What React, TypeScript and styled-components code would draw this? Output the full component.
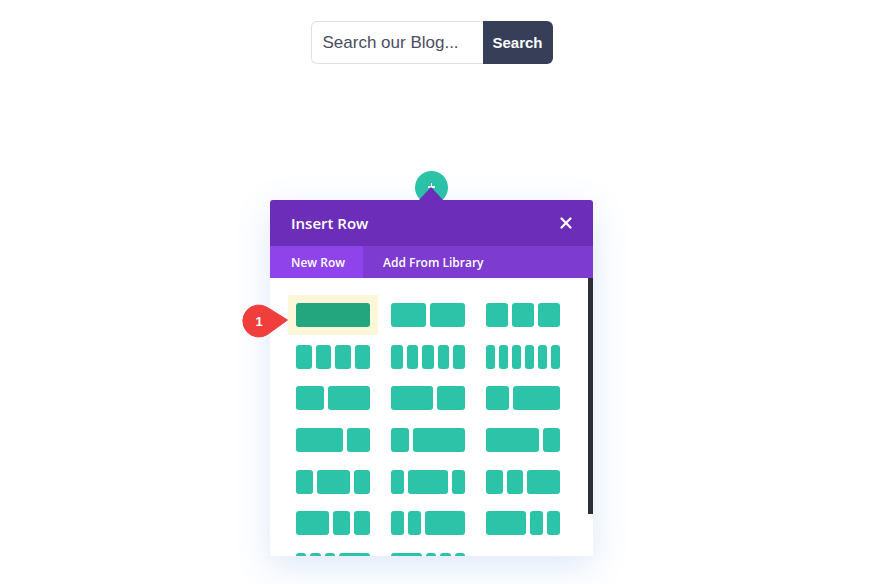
import React from 'react';
import styled, { createGlobalStyle } from 'styled-components';

const GlobalStyle = createGlobalStyle`
  body {
    margin: 0;
    background: #ffffff;
    font-family: "Open Sans", "Liberation Sans", sans-serif;
  }
`;

const layouts: number[][][] = [
  [[1], [1, 1], [1, 1, 1]],
  [[1, 1, 1, 1], [1, 1, 1, 1, 1], [1, 1, 1, 1, 1, 1]],
  [[2, 3], [3, 2], [1, 2]],
  [[2, 1], [1, 3], [3, 1]],
  [[1, 2, 1], [1, 3, 1], [1, 1, 2]],
  [[2, 1, 1], [1, 1, 3], [3, 1, 1]],
  [[1, 1, 1, 3], [3, 1, 1, 1]],
];

const Page = styled.div`
  display: flex;
  flex-direction: column;
  align-items: center;
  padding-top: 21px;
  padding-right: 17px;
  padding-bottom: 40px;
`;

const SearchForm = styled.form`
  display: flex;
  height: 43px;
  margin: 0;
`;

const SearchInput = styled.div`
  width: 172px;
  padding-left: 11px;
  display: flex;
  align-items: center;
  border: 1px solid #dfe1e6;
  border-right: none;
  border-radius: 6px 0 0 6px;
  font-family: "Liberation Sans", Arial, sans-serif;
  font-size: 17px;
  color: #4a4e5e;
  box-sizing: border-box;
`;

const SearchButton = styled.button`
  width: 70px;
  border: none;
  border-radius: 0 6px 6px 0;
  background: #373e58;
  color: #ffffff;
  font-family: "Liberation Sans", Arial, sans-serif;
  font-weight: 700;
  font-size: 15px;
  padding: 0;
  margin: 0;
`;

const ModalWrap = styled.div`
  position: relative;
  margin-top: 136px;
  width: 323px;
`;

const AddCircle = styled.div`
  position: absolute;
  top: -29px;
  left: 145px;
  width: 33px;
  height: 33px;
  border-radius: 50%;
  background: #2cc3a8;

  &::before,
  &::after {
    content: '';
    position: absolute;
    background: #ffffff;
  }
  &::before {
    left: 13px;
    top: 15px;
    width: 7px;
    height: 1.5px;
  }
  &::after {
    left: 15.75px;
    top: 12px;
    width: 1.5px;
    height: 7px;
  }
`;

const Arrow = styled.div`
  position: absolute;
  top: -13px;
  left: 149px;
  width: 0;
  height: 0;
  border-left: 12px solid transparent;
  border-right: 12px solid transparent;
  border-bottom: 13px solid #6c2eb9;
  z-index: 2;
`;

const Modal = styled.div`
  position: relative;
  background: #ffffff;
  box-shadow: 0 10px 36px rgba(43, 110, 218, 0.16);
  border-radius: 3px 3px 0 0;
  overflow: hidden;
`;

const Header = styled.div`
  height: 46px;
  background: #6c2eb9;
  display: flex;
  align-items: center;
  justify-content: space-between;
  padding: 0 21px;
  color: #ffffff;
`;

const Title = styled.div`
  font-size: 15px;
  font-weight: 600;
`;

const Tabs = styled.div`
  display: flex;
  height: 32px;
  background: #7e3bd0;
`;

const Tab = styled.div<{ $active?: boolean }>`
  display: flex;
  align-items: center;
  white-space: nowrap;
  padding-left: ${p => (p.$active ? '21px' : '20px')};
  width: ${p => (p.$active ? '93px' : 'auto')};
  box-sizing: border-box;
  background: ${p => (p.$active ? '#8f43eb' : 'transparent')};
  color: #ffffff;
  font-size: 12px;
  font-weight: 600;
`;

const Body = styled.div`
  position: relative;
  height: 278px;
  overflow: hidden;
  padding: 25px 0 0 26px;
  box-sizing: border-box;
`;

const Scrollbar = styled.div`
  position: absolute;
  top: 0;
  right: 0;
  width: 5.5px;
  height: 236px;
  background: #2b2e35;
`;

const Grid = styled.div`
  display: grid;
  grid-template-columns: repeat(3, 74px);
  column-gap: 21px;
  row-gap: 17.67px;
`;

const Layout = styled.div<{ $selected?: boolean }>`
  display: flex;
  gap: 4px;
  height: 24px;
  background: ${p => (p.$selected ? '#fdf7d9' : 'transparent')};
  box-shadow: ${p => (p.$selected ? '0 0 0 8px #fdf7d9' : 'none')};
`;

const Column = styled.div<{ $selected?: boolean }>`
  flex-basis: 0;
  border-radius: 3px;
  background: ${p => (p.$selected ? '#23a57e' : '#2cc3a8')};
`;

const Badge = styled.div`
  position: absolute;
  left: -28px;
  top: 104px;
  width: 48px;
  height: 34px;
  display: flex;
  align-items: center;
  z-index: 3;
`;

const BadgeText = styled.span`
  position: absolute;
  left: 0;
  width: 34px;
  text-align: center;
  color: #ffffff;
  font-family: "Liberation Sans", Arial, sans-serif;
  font-weight: 700;
  font-size: 13px;
`;

function CloseIcon() {
  return (
    <svg width="12" height="12" viewBox="0 0 12 12">
      <path d="M1.5 1.5 L10.5 10.5 M10.5 1.5 L1.5 10.5" stroke="#ffffff" strokeWidth="2.2" strokeLinecap="round" />
    </svg>
  );
}

function App() {
  return (
    <Page>
      <GlobalStyle />
      <SearchForm>
        <SearchInput>Search our Blog...</SearchInput>
        <SearchButton type="button">Search</SearchButton>
      </SearchForm>
      <ModalWrap>
        <AddCircle />
        <Arrow />
        <Modal>
          <Header>
            <Title>Insert Row</Title>
            <CloseIcon />
          </Header>
          <Tabs>
            <Tab $active>New Row</Tab>
            <Tab>Add From Library</Tab>
          </Tabs>
          <Body>
            <Grid>
              {layouts.map((row, r) =>
                row.map((cols, c) => {
                  const selected = r === 0 && c === 0;
                  return (
                    <Layout key={r + '-' + c} $selected={selected}>
                      {cols.map((grow, i) => (
                        <Column key={i} $selected={selected} style={{ flexGrow: grow }} />
                      ))}
                    </Layout>
                  );
                })
              )}
            </Grid>
            <Scrollbar />
          </Body>
        </Modal>
        <Badge>
          <svg width="48" height="34" viewBox="0 0 48 34">
            <path d="M45.5 16 L25.44 3.5 A16 16 0 1 0 25.44 30.5 Z" fill="#f03e3c" strokeLinejoin="round" stroke="#f03e3c" strokeWidth="1" />
          </svg>
          <BadgeText>1</BadgeText>
        </Badge>
      </ModalWrap>
    </Page>
  );
}

export default App;
